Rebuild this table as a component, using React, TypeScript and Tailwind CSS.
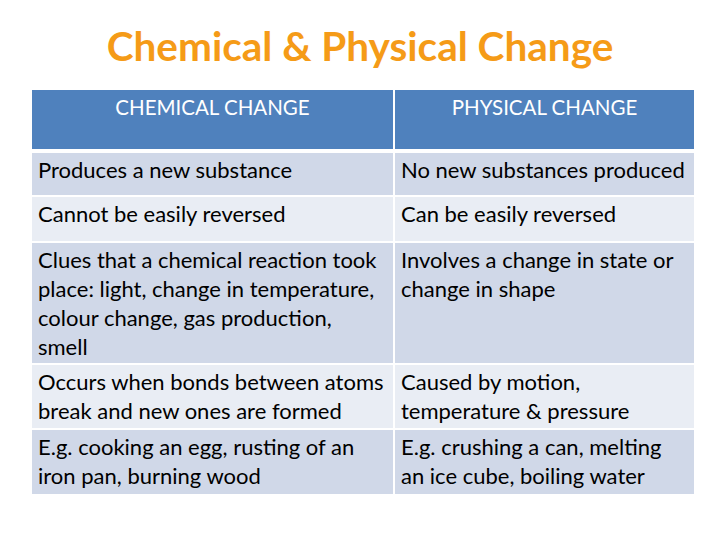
const rows: { left: string[]; right: string[]; h: string; bg: string }[] = [
  { left: ['Produces a new substance'], right: ['No new substances produced'], h: 'h-[42px]', bg: 'bg-[#d0d8e8]' },
  { left: ['Cannot be easily reversed'], right: ['Can be easily reversed'], h: 'h-[44px]', bg: 'bg-[#e9edf4]' },
  {
    left: ['Clues that a chemical reaction took', 'place: light, change in temperature,', 'colour change, gas production,', 'smell'],
    right: ['Involves a change in state or', 'change in shape'],
    h: 'h-[120px]',
    bg: 'bg-[#d0d8e8]',
  },
  {
    left: ['Occurs when bonds between atoms', 'break and new ones are formed'],
    right: ['Caused by motion,', 'temperature & pressure'],
    h: 'h-[63px]',
    bg: 'bg-[#e9edf4]',
  },
  {
    left: ['E.g. cooking an egg, rusting of an', 'iron pan, burning wood'],
    right: ['E.g. crushing a can, melting', 'an ice cube, boiling water'],
    h: 'h-[64px]',
    bg: 'bg-[#d0d8e8]',
  },
];

function Cell({ lines, bg }: { lines: string[]; bg: string }) {
  return (
    <div className={`${bg} text-black text-[22px] leading-[29px] px-[6px] pt-[2px] whitespace-nowrap`}>
      {lines.map((l) => (
        <div key={l}>{l}</div>
      ))}
    </div>
  );
}

export default function App() {
  return (
    <div className="w-[720px] h-[540px] bg-white font-['Lato',sans-serif] overflow-hidden">
      <h1 className="text-center text-[40.5px] font-bold text-[#f59b17] pt-[20px] leading-[52px]">
        Chemical &amp; Physical Change
      </h1>
      <div className="ml-[32px] mt-[18px] w-[662px] flex flex-col gap-[2px]">
        <div className="grid grid-cols-[361px_299px] gap-[2px] h-[59px] mb-[2px]">
          <div className="bg-[#4f81bd] text-white text-[20.5px] text-center pt-[3px] leading-[29px]">CHEMICAL CHANGE</div>
          <div className="bg-[#4f81bd] text-white text-[20.5px] text-center pt-[3px] leading-[29px]">PHYSICAL CHANGE</div>
        </div>
        {rows.map((r) => (
          <div key={r.left[0]} className={`grid grid-cols-[361px_299px] gap-[2px] ${r.h}`}>
            <Cell lines={r.left} bg={r.bg} />
            <Cell lines={r.right} bg={r.bg} />
          </div>
        ))}
      </div>
    </div>
  );
}
